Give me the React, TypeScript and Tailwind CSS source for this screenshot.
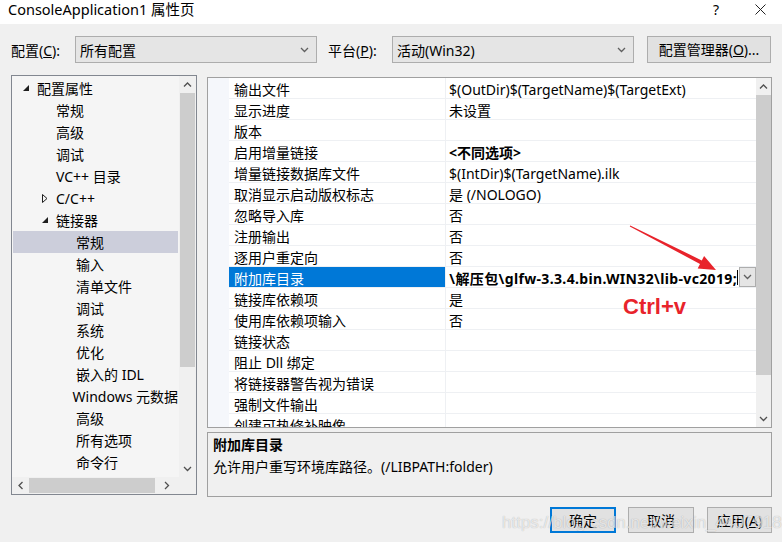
import React from "react";

type TreeItem = { level: 0 | 1 | 2; label: string; toggle?: "open" | "closed"; selected?: boolean };

const tree: TreeItem[] = [
  { level: 0, label: "配置属性", toggle: "open" },
  { level: 1, label: "常规" },
  { level: 1, label: "高级" },
  { level: 1, label: "调试" },
  { level: 1, label: "VC++ 目录" },
  { level: 1, label: "C/C++", toggle: "closed" },
  { level: 1, label: "链接器", toggle: "open" },
  { level: 2, label: "常规", selected: true },
  { level: 2, label: "输入" },
  { level: 2, label: "清单文件" },
  { level: 2, label: "调试" },
  { level: 2, label: "系统" },
  { level: 2, label: "优化" },
  { level: 2, label: "嵌入的 IDL" },
  { level: 2, label: "Windows 元数据" },
  { level: 2, label: "高级" },
  { level: 2, label: "所有选项" },
  { level: 2, label: "命令行" },
];

const props: { name: string; value: string; bold?: boolean; active?: boolean }[] = [
  { name: "输出文件", value: "$(OutDir)$(TargetName)$(TargetExt)" },
  { name: "显示进度", value: "未设置" },
  { name: "版本", value: "" },
  { name: "启用增量链接", value: "<不同选项>", bold: true },
  { name: "增量链接数据库文件", value: "$(IntDir)$(TargetName).ilk" },
  { name: "取消显示启动版权标志", value: "是 (/NOLOGO)" },
  { name: "忽略导入库", value: "否" },
  { name: "注册输出", value: "否" },
  { name: "逐用户重定向", value: "否" },
  { name: "附加库目录", value: "\\解压包\\glfw-3.3.4.bin.WIN32\\lib-vc2019;", active: true },
  { name: "链接库依赖项", value: "是" },
  { name: "使用库依赖项输入", value: "否" },
  { name: "链接状态", value: "" },
  { name: "阻止 Dll 绑定", value: "" },
  { name: "将链接器警告视为错误", value: "" },
  { name: "强制文件输出", value: "" },
  { name: "创建可热修补映像", value: "" },
];

const indent = ["pl-[10px]", "pl-[29px]", "pl-[49px]"];

function Chevron({ dir = "down", color = "#606060" }: { dir?: "down" | "up" | "left" | "right"; color?: string }) {
  const pts = {
    down: "1,1 4.5,4.5 8,1",
    up: "1,4.5 4.5,1 8,4.5",
    left: "4.5,1 1,4.5 4.5,8",
    right: "1,1 4.5,4.5 1,8",
  }[dir];
  const w = dir === "down" || dir === "up" ? 9 : 6;
  const h = dir === "down" || dir === "up" ? 6 : 9;
  return (
    <svg width={w} height={h} viewBox={`0 0 ${w} ${h}`}>
      <polyline points={pts} fill="none" stroke={color} strokeWidth="1.3" />
    </svg>
  );
}

function Toggle({ kind }: { kind?: "open" | "closed" }) {
  if (kind === "open")
    return (
      <svg width="6" height="6" viewBox="0 0 6 6">
        <polygon points="6,0 6,6 0,6" fill="#1e1e1e" />
      </svg>
    );
  if (kind === "closed")
    return (
      <svg width="6" height="9" viewBox="0 0 6 9">
        <polygon points="0.5,0.5 5,4.5 0.5,8.5" fill="none" stroke="#1e1e1e" strokeWidth="1" />
      </svg>
    );
  return null;
}

export default function App() {
  return (
    <div className="relative w-[782px] h-[542px] overflow-hidden bg-[#f0f0f0] text-[14px] text-black font-['Noto_Sans','Noto_Sans_CJK_SC',sans-serif]">
      {/* title bar */}
      <div className="h-[24px] bg-white flex items-start justify-between pl-[8px] pr-[16px] pt-[0px]">
        <div className="text-[14.5px] leading-[19px]">ConsoleApplication1 属性页</div>
        <div className="flex items-center gap-[36px] h-[19px]">
          <span className="text-[14px] leading-[18px]">?</span>
          <svg width="11" height="11" viewBox="0 0 11 11">
            <path d="M0.5 0.5 L10.5 10.5 M10.5 0.5 L0.5 10.5" stroke="#222" strokeWidth="1" />
          </svg>
        </div>
      </div>

      {/* configuration row */}
      <div className="mt-[12px] h-[27px] flex items-center pl-[11px]">
        <div className="w-[64px] pt-[1px]">
          配置(<span className="underline">C</span>):
        </div>
        <div className="w-[242px] h-[27px] border border-[#adadad] bg-[#e5e5e5] flex items-center justify-between pl-[4px] pr-[7px]">
          <span className="pt-[1px]">所有配置</span>
          <Chevron />
        </div>
        <div className="w-[64px] ml-[11px] pt-[1px]">
          平台(<span className="underline">P</span>):
        </div>
        <div className="w-[242px] h-[27px] border border-[#adadad] bg-[#e5e5e5] flex items-center justify-between pl-[4px] pr-[7px]">
          <span className="pt-[1px]">活动(Win32)</span>
          <Chevron />
        </div>
        <div className="ml-[13px] w-[124px] h-[27px] border border-[#adadad] bg-[#e1e1e1] flex items-center justify-center">
          配置管理器(<span className="underline">O</span>)...
        </div>
      </div>

      {/* main area */}
      <div className="mt-[12px] flex pl-[11px]">
        {/* tree */}
        <div className="w-[186px] h-[420px] border border-[#828790] bg-[#f5f5f5] flex flex-col">
          <div className="flex h-[401px]">
            <div className="w-[167px] overflow-hidden pt-[1px] px-[1px]">
              {tree.map((t, i) => (
                <div
                  key={i}
                  className={`h-[22px] flex items-center whitespace-nowrap ${indent[t.level]} ${t.selected ? "bg-[#cccedb]" : ""}`}
                >
                  <div className="w-[14px] flex items-center">
                    <Toggle kind={t.toggle} />
                  </div>
                  <span className="leading-[22px] pt-[1px]">{t.label}</span>
                </div>
              ))}
            </div>
            <div className="w-[17px] bg-[#f0f0f0] flex flex-col items-center">
              <div className="h-[17px] flex items-center justify-center">
                <Chevron dir="up" color="#505050" />
              </div>
              <div className="w-[15px] h-[274px] bg-[#cdcdcd]" />
              <div className="flex-1" />
              <div className="h-[17px] flex items-center justify-center">
                <Chevron dir="down" color="#505050" />
              </div>
            </div>
          </div>
          <div className="flex-1 flex">
            <div className="w-[167px] bg-[#f0f0f0] flex items-center">
              <div className="w-[17px] flex justify-center">
                <Chevron dir="left" color="#505050" />
              </div>
              <div className="w-[126px] h-[15px] bg-[#cdcdcd]" />
              <div className="flex-1 flex justify-center">
                <Chevron dir="right" color="#505050" />
              </div>
            </div>
            <div className="w-[17px] bg-[#f0f0f0]" />
          </div>
        </div>

        {/* right column */}
        <div className="ml-[10px] w-[565px] flex flex-col">
          <div className="mt-[2px] h-[351px] border border-[#a0a0a0] bg-white flex">
            <div className="flex-1 flex overflow-hidden">
              <div className="w-[21px] bg-[#f5f7fb]" />
              <div className="flex-1">
                {props.map((p, i) => (
                  <div key={i} className="h-[21px] flex border-b border-[#eef0f3]">
                    <div
                      className={`w-[217px] pl-[5px] pt-[2px] leading-[19px] border-r border-[#eef0f3] whitespace-nowrap ${p.active ? "bg-[#0078d7] text-white" : ""}`}
                    >
                      {p.name}
                    </div>
                    {p.active ? (
                      <div className="flex-1 flex items-center pl-[1px]">
                        <div className="w-[290px] flex justify-end overflow-hidden whitespace-nowrap font-bold tracking-[0.35px] pt-[2px] leading-[19px]">
                          <span>{p.value}</span>
                        </div>
                        <div className="w-[1px] h-[15px] bg-black" />
                        <div className="ml-[1px] w-[17px] h-[20px] border border-[#adadad] bg-[#e5e5e5] flex items-center justify-center">
                          <Chevron />
                        </div>
                      </div>
                    ) : (
                      <div className={`flex-1 pl-[3px] pt-[2px] leading-[19px] whitespace-nowrap ${p.bold ? "font-bold" : ""}`}>
                        {p.value}
                      </div>
                    )}
                  </div>
                ))}
              </div>
            </div>
            <div className="w-[15px] bg-[#f0f0f0] flex flex-col items-center">
              <div className="h-[17px] flex items-center justify-center">
                <Chevron dir="up" color="#505050" />
              </div>
              <div className="w-[15px] h-[280px] bg-[#cdcdcd]" />
              <div className="flex-1" />
              <div className="h-[17px] flex items-center justify-center">
                <Chevron dir="down" color="#505050" />
              </div>
            </div>
          </div>
          <div className="mt-[4px] h-[65px] border border-[#a0a0a0] px-[5px] pt-[1px] leading-[22px]">
            <div className="font-bold">附加库目录</div>
            <div>允许用户重写环境库路径。(/LIBPATH:folder)</div>
          </div>
        </div>
      </div>

      {/* buttons */}
      <div className="mt-[10px] flex justify-end pr-[10px]">
        <div className="w-[66px] h-[26px] border-2 border-[#0078d7] bg-[#e1e1e1] flex items-center justify-center">确定</div>
        <div className="ml-[12px] w-[66px] h-[26px] border border-[#adadad] bg-[#e1e1e1] flex items-center justify-center">取消</div>
        <div className="ml-[13px] w-[65px] h-[26px] border border-[#adadad] bg-[#e1e1e1] flex items-center justify-center">
          应用(<span className="underline">A</span>)
        </div>
      </div>

      {/* watermark */}
      <div className="absolute left-[502px] top-[512px] text-[17px] leading-[22px] text-white/70 font-['Liberation_Sans',sans-serif] [text-shadow:0_0_1px_rgba(0,0,0,0.3)] pointer-events-none">
        https://blog.csdn.net/weixin_44079181
      </div>

      {/* annotation */}
      <div className="absolute left-[623px] top-[293px] text-[22px] leading-[28px] font-bold text-[#e8232b] font-['Liberation_Sans',sans-serif]">
        Ctrl+v
      </div>
      <svg className="absolute left-0 top-0 pointer-events-none" width="782" height="542" viewBox="0 0 782 542">
        <polygon
          points="630.2,225.6 701.8,260.4 704.1,256 716,270 697.7,268.4 700,264 629.8,226.4"
          fill="#e8232b"
        />
      </svg>
    </div>
  );
}
